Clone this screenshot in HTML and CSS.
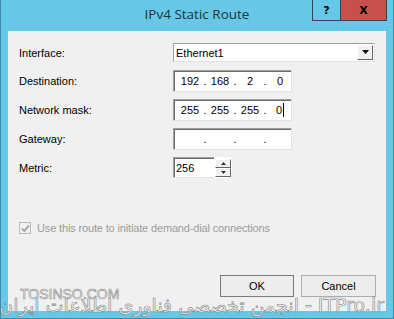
FILE: index.html
```html
<!DOCTYPE html>
<html>

<head>
  <title>IPv4 Static Route</title>
  <link rel="stylesheet" href="styles.css">
</head>

<body>
  <div class="window">
    <div class="titlebar">
      <span></span>
      <span class="title">IPv4 Static Route</span>
      <div class="caption">
        <span class="cap help">?</span>
        <span class="cap close">X</span>
      </div>
    </div>

    <div class="client">
      <div class="fields">
        <label>Interface:</label>
        <div class="combo">
          <span class="combo-text">Ethernet1</span>
          <span class="drop"><svg width="9" height="5" viewBox="0 0 9 5"><path d="M1 0h7L4.5 4z" fill="#000" /></svg></span>
        </div>

        <label>Destination:</label>
        <div class="ip">
          <span>192</span><i>.</i><span>168</span><i>.</i><span>2</span><i>.</i><span>0</span>
        </div>

        <label>Network mask:</label>
        <div class="ip">
          <span>255</span><i>.</i><span>255</span><i>.</i><span>255</span><i>.</i><span>0<b class="caret"></b></span>
        </div>

        <label>Gateway:</label>
        <div class="ip">
          <span></span><i>.</i><span></span><i>.</i><span></span><i>.</i><span></span>
        </div>

        <label>Metric:</label>
        <div class="metric">
          <div class="spin-edit">256</div>
          <div class="spin">
            <span class="spin-btn"><svg width="5" height="3" viewBox="0 0 5 3"><path d="M2.5 0L5 3H0z" fill="#333" /></svg></span>
            <span class="spin-btn"><svg width="5" height="3" viewBox="0 0 5 3"><path d="M0 0h5L2.5 3z" fill="#333" /></svg></span>
          </div>
        </div>
      </div>

      <div class="check">
        <span class="box"><svg width="9" height="9" viewBox="0 0 9 9"><path d="M1 4.5l2.3 2.5L8 1.5" stroke="#9a9a9a" stroke-width="1.8" fill="none" /></svg></span>
        <span class="check-label">Use this route to initiate demand-dial connections</span>
      </div>

      <div class="buttons">
        <button class="btn default">OK</button>
        <button class="btn">Cancel</button>
      </div>
    </div>

    <div class="watermark">
      <div class="wm-site">TOSINSO.COM</div>
      <div class="wm-line" dir="rtl">ITPro.ir - انجمن تخصصی فناوری اطلاعات ایران</div>
    </div>
  </div>
</body>

</html>
```

FILE: styles.css
```css
body {
  margin: 0;
  font-family: "Liberation Sans", Arial, sans-serif;
  font-size: 11px;
  color: #000;
}

.window {
  position: relative;
  width: 394px;
  height: 319px;
  box-sizing: border-box;
  background: #66c8e6;
  border: 1px solid #3d8ca8;
  border-top: 0;
  display: flex;
  flex-direction: column;
  padding: 0 7px 7px 7px;
  overflow: hidden;
}

.titlebar {
  height: 31px;
  display: grid;
  grid-template-columns: 1fr auto 1fr;
  align-items: start;
}

.title {
  font-family: "Open Sans", sans-serif;
  font-size: 13.5px;
  color: #173838;
  padding-top: 5px;
}

.caption {
  justify-self: end;
  display: flex;
  border: 1px solid #2f4656;
  border-top: 0;
  margin-right: -1px;
}

.cap {
  height: 20px;
  display: flex;
  align-items: center;
  justify-content: center;
  font-family: "DejaVu Sans", sans-serif;
  font-weight: bold;
  font-size: 11px;
}

.help {
  width: 27px;
  border-right: 1px solid #2f4656;
}

.close {
  width: 45px;
  background: #c7504a;
}

.client {
  flex: 1;
  background: #f0f0f0;
  display: flex;
  flex-direction: column;
  padding: 12px 10px 14px 11px;
}

.fields {
  display: grid;
  grid-template-columns: 154px auto;
  row-gap: 7px;
  align-items: center;
  justify-items: start;
}

.combo {
  width: 202px;
  height: 19px;
  box-sizing: border-box;
  background: #fff;
  border: 1px solid #a0a0a0;
  border-right-color: #e3e3e3;
  border-bottom-color: #e3e3e3;
  display: flex;
  align-items: center;
  margin-bottom: 1px;
}

.combo-text {
  flex: 1;
  padding-left: 2px;
}

.drop {
  width: 16px;
  height: 15px;
  margin-right: 1px;
  box-sizing: border-box;
  background: #f0f0f0;
  border: 1px solid #fff;
  border-right-color: #646464;
  border-bottom-color: #646464;
  display: flex;
  align-items: center;
  justify-content: center;
}

.ip {
  width: 119px;
  height: 22px;
  box-sizing: border-box;
  background: #fff;
  border: 1px solid #a0a0a0;
  border-right-color: #e3e3e3;
  border-bottom-color: #e3e3e3;
  box-shadow: inset 1px 1px 0 #6a6a6a;
  display: grid;
  grid-template-columns: 22px 8px 22px 8px 22px 8px 22px;
  padding-left: 5px;
  align-items: center;
}

.ip span {
  text-align: center;
}

.ip i {
  font-style: normal;
  text-align: center;
}

.caret {
  display: inline-block;
  width: 1px;
  height: 14px;
  background: #000;
  vertical-align: -3px;
  margin-left: 1px;
}

.metric {
  display: flex;
  align-items: center;
  height: 21px;
}

.spin-edit {
  width: 41px;
  height: 21px;
  box-sizing: border-box;
  background: #fff;
  border: 1px solid #a0a0a0;
  border-right: 0;
  border-bottom-color: #e3e3e3;
  box-shadow: inset 1px 1px 0 #6a6a6a;
  padding: 4px 0 0 2px;
}

.spin {
  display: flex;
  flex-direction: column;
  background: #fff;
  height: 21px;
  box-sizing: border-box;
  padding: 0 1px 0 1px;
  justify-content: center;
}

.spin-btn {
  width: 16px;
  height: 9px;
  box-sizing: border-box;
  background: #f0f0f0;
  border: 1px solid #fff;
  border-right-color: #646464;
  border-bottom-color: #646464;
  display: flex;
  align-items: center;
  justify-content: center;
}

.check {
  margin-top: 44px;
  display: flex;
  align-items: center;
  gap: 6px;
  color: #9c9c9c;
}

.check-label {
  letter-spacing: -0.15px;
}

.box {
  width: 12px;
  height: 12px;
  box-sizing: border-box;
  border: 1px solid #bdbdbd;
  background: #f0f0f0;
  display: flex;
  align-items: center;
  justify-content: center;
}

.buttons {
  margin-top: auto;
  display: flex;
  justify-content: flex-end;
  gap: 7px;
}

.btn {
  width: 75px;
  height: 22px;
  font-family: "Liberation Sans", Arial, sans-serif;
  font-size: 11px;
  background: #ececec;
  border: 1px solid #acacac;
  padding: 0;
}

.btn.default {
  width: 74px;
  border-color: #7a7a7a;
}

.watermark {
  position: absolute;
  left: 0;
  right: 0;
  bottom: 0;
  height: 34px;
  opacity: 0.85;
}

.wm-site {
  position: absolute;
  left: 19px;
  top: 2px;
  font-family: "Liberation Sans", Arial, sans-serif;
  font-size: 14px;
  color: #fff;
  -webkit-text-stroke: 0.6px #7a7a7a;
}

.wm-line {
  position: absolute;
  left: 8px;
  right: 9px;
  bottom: 2px;
  font-family: "DejaVu Sans", sans-serif;
  font-size: 19px;
  line-height: 22px;
  white-space: nowrap;
  color: #fff;
  -webkit-text-stroke: 0.7px #808080;
}
```
